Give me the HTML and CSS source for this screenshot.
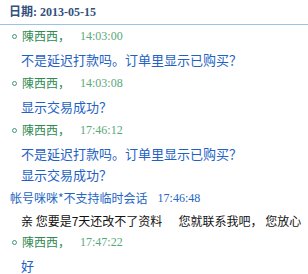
FILE: index.html
```html
<!DOCTYPE html>
<html lang="zh-CN">
<head>
    <meta charset="UTF-8">
    <meta name="viewport" content="width=device-width, initial-scale=1.0">
    <title>聊天记录</title>
    <link rel="stylesheet" href="styles.css">
</head>
<body>
    <div class="log">
        <div class="date">日期: 2013-05-15</div>
        <ul class="msgs">
            <li class="msg">
                <div class="from"><span class="nick">陳西西，</span><span class="time">14:03:00</span></div>
                <div class="text">不是延迟打款吗。订单里显示已购买？</div>
            </li>
            <li class="msg">
                <div class="from"><span class="nick">陳西西，</span><span class="time">14:03:08</span></div>
                <div class="text">显示交易成功？</div>
            </li>
            <li class="msg">
                <div class="from"><span class="nick">陳西西，</span><span class="time">17:46:12</span></div>
                <div class="text">不是延迟打款吗。订单里显示已购买？<br>显示交易成功？</div>
            </li>
            <li class="msg other">
                <div class="from"><span class="nick">帐号咪咪*不支持临时会话</span><span class="time">17:46:48</span></div>
                <div class="text">亲 您要是7天还改不了资料      您就联系我吧， 您放心</div>
            </li>
            <li class="msg">
                <div class="from"><span class="nick">陳西西，</span><span class="time">17:47:22</span></div>
                <div class="text">好</div>
            </li>
        </ul>
    </div>
</body>
</html>
```

FILE: styles.css
```css
body {
    margin: 0;
    padding: 0;
    background-color: #fff;
    font-family: "Noto Sans CJK SC", sans-serif;
    overflow: hidden;
}

.log {
    width: 308px;
}

.date {
    padding: 3px 9px;
    line-height: 18px;
    font-family: "Liberation Serif", "Noto Sans CJK SC", serif;
    font-size: 12px;
    font-weight: bold;
    color: #33507c;
    border-bottom: 1px solid #9cc3e6;
}

.msgs {
    list-style: none;
    margin: 0;
    padding: 0;
}

.from {
    display: flex;
    align-items: center;
    padding-left: 22px;
    line-height: 22px;
    font-size: 12px;
    white-space: nowrap;
}

.from::before {
    content: "";
    width: 3px;
    height: 3px;
    margin-left: -10px;
    margin-right: 5px;
    margin-top: 1px;
    border: 1px solid #3b9a6c;
    border-radius: 50%;
}

.nick {
    color: #2f8a52;
}

.time {
    margin-left: 10px;
    font-family: "Liberation Serif", serif;
    font-size: 12px;
    color: #5aa97a;
}

.text {
    padding: 2px 0 2px 21px;
    line-height: 21px;
    font-size: 13px;
    color: #1f62c4;
    white-space: pre;
}

.other .from {
    padding-left: 10px;
}

.other .from::before {
    display: none;
}

.other .nick,
.other .time {
    color: #2566c2;
}

.other .text {
    padding-bottom: 0;
    line-height: 20px;
    font-size: 12px;
    color: #111;
}
```
